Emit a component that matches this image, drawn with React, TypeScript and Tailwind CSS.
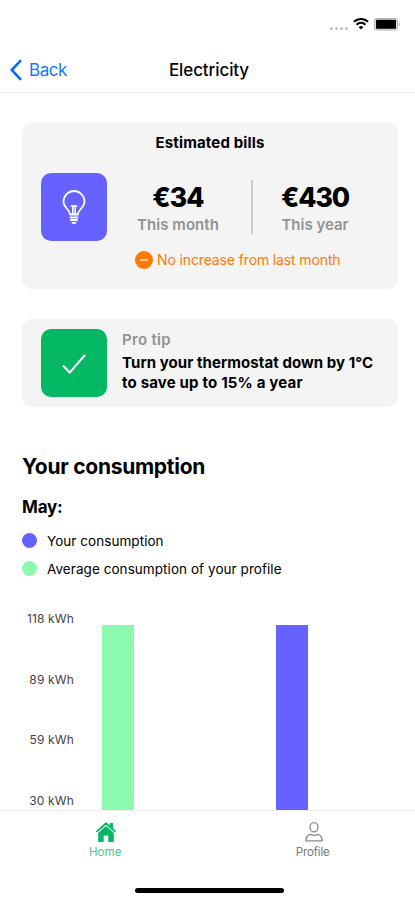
import { Minus } from "lucide-react";

const LEVELS = ["118 kWh", "89 kWh", "59 kWh", "30 kWh"];

function StatusBar() {
  return (
    <div className="flex h-12 shrink-0 items-start justify-end pr-[14px] pt-[17px]">
      <div className="flex gap-[2px] pr-[5px] pt-[10px]">
        <span className="h-[3px] w-[3px] rounded-full bg-[#bdbdbd]" />
        <span className="h-[3px] w-[3px] rounded-full bg-[#bdbdbd]" />
        <span className="h-[3px] w-[3px] rounded-full bg-[#bdbdbd]" />
        <span className="h-[3px] w-[3px] rounded-full bg-[#bdbdbd]" />
      </div>
      <svg width="16" height="13" viewBox="0 0 16 13" fill="none" stroke="#000" strokeWidth="2">
        <path d="M0.9 4.8a10.2 10.2 0 0 1 14.2 0" />
        <path d="M3.5 7.7a6.4 6.4 0 0 1 9 0" />
        <path d="M8 12.6 5.7 10.2a3.3 3.3 0 0 1 4.6 0Z" fill="#000" stroke="none" />
      </svg>
      <svg className="ml-[5px]" width="27" height="14" viewBox="0 0 27 14">
        <rect x="0.5" y="1.5" width="23" height="11.5" rx="2" fill="#ddd" stroke="#b5b5b5" />
        <rect x="2" y="2.8" width="20" height="9" rx="0.8" />
        <path d="M24.8 5.2c1.6.6 1.6 3.4 0 4Z" fill="#b5b5b5" />
      </svg>
    </div>
  );
}

function Bulb() {
  return (
    <svg width="24" height="36" viewBox="0 0 24 36" fill="none" stroke="#fff" strokeWidth="1.8" strokeLinecap="round">
      <path d="M8.2 25.5c0-4.8-6.7-6.6-6.7-13a10.500 10.500 0 0 1 21 0c0 6.400-6.700 8.200-6.700 13Z" strokeLinejoin="round" />
      <path d="M9.3 17h5.4M10.8 17.500v7.500M13.200 17.500v7.500" strokeWidth="1.6" />
      <path d="M8.5 28.5h7M8.8 31h6.4M10.5 33.8h3" />
    </svg>
  );
}

export default function App() {
  return (
    <div className="flex h-[900px] w-[415px] flex-col overflow-hidden bg-white font-['Inter',sans-serif] text-black">
      <StatusBar />

      {/* Header */}
      <header className="grid h-[45px] shrink-0 grid-cols-[100px_1fr_100px] items-center border-b border-[#ededed]">
        <button className="flex items-center pl-[10px] text-[17px] text-[#1677ff]">
          <svg className="mr-[7px]" width="12" height="22" viewBox="0 0 12 22" fill="none" stroke="#0a6cff" strokeWidth="2.6">
            <path d="M11 1.2 1.8 11 11 20.8" />
          </svg>
          <span className="pt-[2px] tracking-[-0.45px]">Back</span>
        </button>
        <h1 className="pl-[3px] pt-[2px] text-center text-[17px] font-medium tracking-[-0.1px]">Electricity</h1>
      </header>

      <main className="flex h-[717px] shrink-0 flex-col overflow-hidden px-[22px] pt-[29px]">
        {/* Bills */}
        <section className="h-[167px] w-[376px] shrink-0 rounded-[10px] bg-[#f4f4f4] pt-[11px]">
          <h2 className="text-center text-[15px] font-bold leading-5 tracking-[0.15px]">Estimated bills</h2>
          <div className="mt-[20px] flex h-[68px] pl-[19px]">
            <div className="flex h-[68px] w-[66px] items-center justify-center rounded-[10px] bg-[#6562ff]">
              <Bulb />
            </div>
            <div className="ml-[22px] flex w-[98px] flex-col items-center pt-[8px]">
              <span className="text-[26.5px] font-extrabold leading-8 tracking-[-0.9px]">€34</span>
              <span className="mt-[2px] text-[15px] font-semibold leading-5 tracking-[0.05px] text-[#929292]">This month</span>
            </div>
            <div className="ml-[24px] mt-[7px] h-[54px] w-[2px] bg-[#cbcbcb]" />
            <div className="ml-[14px] flex w-[96px] flex-col items-center pt-[8px]">
              <span className="text-[26.5px] font-extrabold leading-8 tracking-[-1.1px]">€430</span>
              <span className="mt-[2px] text-[15px] font-semibold leading-5 text-[#929292]">This year</span>
            </div>
          </div>
          <div className="mt-[9px] flex items-center pl-[113px] text-[14px] leading-5 text-[#ff7a00]">
            <span className="mr-1 flex h-[18px] w-[18px] items-center justify-center rounded-full bg-[#ff7a00]">
              <Minus size={12} color="#fff" strokeWidth={2.5} />
            </span>
            <span className="whitespace-nowrap tracking-[-0.13px]">No increase from last month</span>
          </div>
        </section>

        {/* Tip */}
        <section className="mt-[30px] flex h-[88px] w-[376px] shrink-0 rounded-[10px] bg-[#f4f4f4] pl-[19px] pt-[10px]">
          <div className="flex h-[68px] w-[66px] items-center justify-center rounded-[10px] bg-[#05b863]">
            <svg className="mt-px" width="24" height="20" viewBox="0 0 24 20" fill="none" stroke="#fff" strokeWidth="2">
              <path d="M1 11.5 7.8 18.5 23 1" />
            </svg>
          </div>
          <div className="ml-[15px] whitespace-nowrap pt-px text-[15px] leading-5">
            <p className="font-semibold tracking-[0.3px] text-[#929292]">Pro tip</p>
            <p className="mt-[3px] font-bold tracking-[0.07px]">Turn your thermostat down by 1°C</p>
            <p className="font-bold tracking-[0.18px]">to save up to 15% a year</p>
          </div>
        </section>

        {/* Consumption */}
        <h2 className="mt-[46px] text-[21px] font-bold leading-7 tracking-[-0.27px]">Your consumption</h2>
        <h3 className="mt-[14px] text-[17px] font-bold leading-6 tracking-[-0.2px]">May:</h3>
        <ul className="mt-[11px] text-[13.5px] leading-5">
          <li className="flex h-[21px] items-center gap-[10px]">
            <span className="h-[15px] w-[15px] rounded-full bg-[#6562ff]" />
            <span className="tracking-[0.05px]">Your consumption</span>
          </li>
          <li className="mt-[7px] flex h-[21px] items-center gap-[10px]">
            <span className="h-[15px] w-[15px] rounded-full bg-[#8bf9ae]" />
            <span className="tracking-[0.06px]">Average consumption of your profile</span>
          </li>
        </ul>
        <div className="mt-[30px] flex shrink-0">
          <div className="flex w-[52px] flex-col gap-[40.5px] text-right text-[12px] leading-5 tracking-[0.15px] text-[#444]">
            {LEVELS.map((level) => (
              <span key={level} className="whitespace-nowrap">{level}</span>
            ))}
          </div>
          <div className="ml-[28px] mt-[16px] h-[220px] w-8 bg-[#8bf9ae]" />
          <div className="ml-[141.5px] mt-[16px] h-[220px] w-8 bg-[#6562ff]" />
        </div>
      </main>

      {/* Tabs */}
      <nav className="grid h-[78px] shrink-0 grid-cols-2 border-t border-[#f0f0f0] pl-[2px] text-[11.5px] leading-4">
        <div className="flex flex-col items-center pt-[11px] text-[#3fc987]">
          <svg className="ml-px" width="22" height="20" viewBox="0 0 22 20" fill="#05b863">
            <path d="M11 0 .8 9.3l1.3 1.3L11 2.7l8.900 7.900 1.300-1.300-3.200-2.900V1h-3.200v2.600Z" />
            <path d="M3.2 10.900 11 3.900l7.800 7V20h-5.500v-6.500H8.700V20H3.2Z" />
          </svg>
          <span className="mt-[2px] tracking-[0.1px]">Home</span>
        </div>
        <div className="flex flex-col items-center pl-[2px] pt-[11px] text-[#777]">
          <svg className="ml-[2px]" width="18" height="20" viewBox="0 0 18 20" fill="none" stroke="#888" strokeWidth="1.3">
            <ellipse cx="9" cy="5.3" rx="4" ry="4.6" />
            <path d="M.8 18.9c0-4.2 2.7-6.6 5-6.6 1 .9 2 1.3 3.2 1.3s2.2-.4 3.2-1.3c2.3 0 5 2.4 5 6.6Z" strokeLinejoin="round" />
          </svg>
          <span className="mt-[2px] tracking-[-0.15px]">Profile</span>
        </div>
      </nav>
      <div className="ml-[135px] h-[5px] w-[149px] shrink-0 rounded-full bg-black" />
    </div>
  );
}
